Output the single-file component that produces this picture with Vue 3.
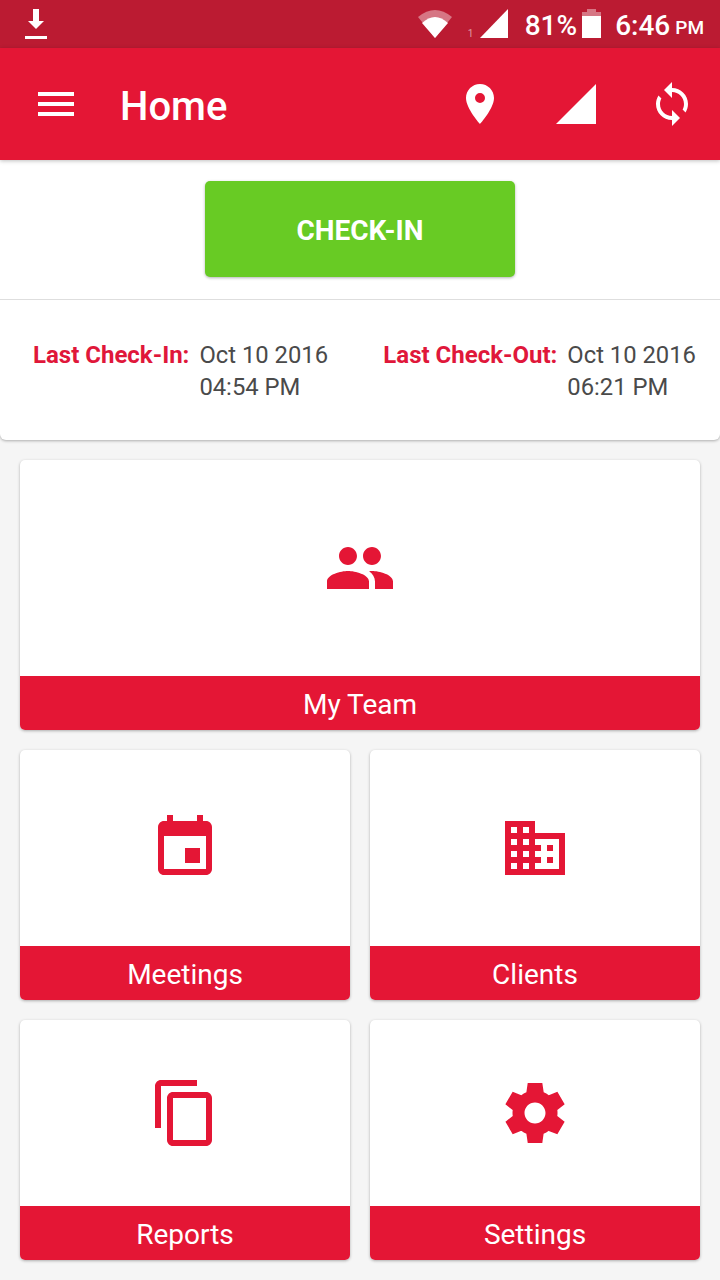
<script setup>
const tiles = [
  { name: 'My Team', wide: true, d: 'M16 11c1.66 0 2.99-1.34 2.99-3S17.66 5 16 5c-1.66 0-3 1.34-3 3s1.34 3 3 3zm-8 0c1.66 0 2.99-1.34 2.99-3S9.66 5 8 5C6.34 5 5 6.34 5 8s1.34 3 3 3zm0 2c-2.33 0-7 1.17-7 3.5V19h14v-2.5c0-2.33-4.67-3.5-7-3.5zm8 0c-.29 0-.62.02-.97.05 1.16.84 1.97 1.97 1.97 3.45V19h6v-2.5c0-2.33-4.67-3.5-7-3.5z' },
  { name: 'Meetings', d: 'M17 12h-5v5h5v-5zM16 1v2H8V1H6v2H5c-1.11 0-1.99.9-1.99 2L3 19c0 1.1.89 2 2 2h14c1.1 0 2-.9 2-2V5c0-1.1-.9-2-2-2h-1V1h-2zm3 18H5V8h14v11z' },
  { name: 'Clients', d: 'M12 7V3H2v18h20V7H12zM6 19H4v-2h2v2zm0-4H4v-2h2v2zm0-4H4V9h2v2zm0-4H4V5h2v2zm4 12H8v-2h2v2zm0-4H8v-2h2v2zm0-4H8V9h2v2zm0-4H8V5h2v2zm10 12h-8v-2h2v-2h-2v-2h2v-2h-2V9h8v10zm-2-8h-2v2h2v-2zm0 4h-2v2h2v-2z' },
  { name: 'Reports', d: 'M16 1H4c-1.1 0-2 .9-2 2v14h2V3h12V1zm3 4H8c-1.1 0-2 .9-2 2v14c0 1.1.9 2 2 2h11c1.1 0 2-.9 2-2V7c0-1.1-.9-2-2-2zm0 16H8V7h11v14z' },
  { name: 'Settings', d: 'M19.44 12.99l-.01.02c.04-.33.08-.67.08-1.01 0-.34-.03-.66-.07-.99l.01.02 2.44-1.92-2.43-4.22-2.87 1.16.01.01c-.52-.4-1.09-.74-1.71-1h.01L14.44 2H9.57l-.44 3.07h.01c-.62.26-1.19.6-1.71 1l.01-.01-2.88-1.17-2.44 4.22 2.44 1.92.01-.02c-.04.33-.07.65-.07.99 0 .34.03.68.08 1.01l-.01-.02-2.1 1.65-.33.26 2.43 4.2 2.88-1.15-.02-.04c.53.41 1.1.75 1.73 1.01h-.03L9.58 22h4.85s.03-.18.06-.42l.38-2.65h-.01c.62-.26 1.2-.6 1.73-1.01l-.02.04 2.88 1.15 2.43-4.2s-.14-.12-.33-.26l-2.11-1.66zM12 15.5c-1.93 0-3.5-1.57-3.5-3.5s1.57-3.5 3.5-3.5 3.5 1.57 3.5 3.5-1.57 3.5-3.5 3.5z' },
]
const checks = [
  { label: 'Last Check-In:', date: 'Oct 10 2016', time: '04:54 PM' },
  { label: 'Last Check-Out:', date: 'Oct 10 2016', time: '06:21 PM' },
]
</script>

<template>
  <div class="screen">
    <div class="status">
      <svg class="st-download" width="22" height="30" viewBox="0 0 22 30">
        <path fill="#fff" d="M8 0h6v12h5l-8 8-8-8h5zM0 27h22v3H0z" />
      </svg>
      <div class="st-right">
        <svg class="st-wifi" width="34" height="28" viewBox="0 0 34 28">
          <path fill="#fff" fill-opacity=".4" d="M17 28 0 7Q17-7 34 7Z" />
          <path fill="#fff" d="M17 28 4 13Q17 1 30 13Z" />
        </svg>
        <span class="st-sim">1</span>
        <svg class="st-signal" width="28" height="29" viewBox="0 0 28 29">
          <path fill="#fff" d="M0 29 28 0v29z" />
        </svg>
        <span class="st-text st-pct">81%</span>
        <svg class="st-batt" width="19" height="29" viewBox="0 0 19 29">
          <path fill="#fff" fill-opacity=".4" d="M5 0h9v3h5v4H0V3h5z" />
          <path fill="#fff" d="M0 7h19v22H0z" />
        </svg>
        <span class="st-text st-time">6:46</span>
        <span class="st-text st-pm">PM</span>
      </div>
    </div>

    <header class="toolbar">
      <svg class="menu" width="36" height="24" viewBox="0 0 36 24">
        <path fill="#fff" d="M0 0h36v4H0zM0 10h36v4H0zM0 20h36v4H0z" />
      </svg>
      <h1 class="title">Home</h1>
      <svg class="tb-icon tb-pin" width="48" height="48" viewBox="0 0 24 24">
        <path fill="#fff" d="M12 2C8.13 2 5 5.13 5 9c0 5.25 7 13 7 13s7-7.75 7-13c0-3.87-3.13-7-7-7zm0 9.5a2.5 2.5 0 0 1 0-5 2.5 2.5 0 0 1 0 5z" />
      </svg>
      <svg class="tb-icon tb-signal" width="48" height="48" viewBox="0 0 24 24">
        <path fill="#fff" d="M2 22 22 2v20z" />
      </svg>
      <svg class="tb-icon tb-sync" width="48" height="48" viewBox="0 0 24 24">
        <path fill="#fff" d="M12 4V1L8 5l4 4V6c3.31 0 6 2.69 6 6 0 1.01-.25 1.97-.7 2.8l1.46 1.46C19.54 15.03 20 13.57 20 12c0-4.42-3.58-8-8-8zm0 14c-3.31 0-6-2.69-6-6 0-1.01.25-1.97.7-2.8L5.24 7.74C4.46 8.97 4 10.43 4 12c0 4.42 3.58 8 8 8v3l4-4-4-4v3z" />
      </svg>
    </header>

    <section class="panel">
      <div class="action">
        <button class="checkin">CHECK-IN</button>
      </div>
      <div class="info">
        <div v-for="c in checks" :key="c.label" class="check">
          <span class="check-label">{{ c.label }}</span>
          <span class="check-value">{{ c.date }}<br />{{ c.time }}</span>
        </div>
      </div>
    </section>

    <main class="grid">
      <article v-for="t in tiles" :key="t.name" class="tile" :class="{ wide: t.wide }">
        <div class="tile-body">
          <svg width="72" height="72" viewBox="0 0 24 24"><path fill="#e41635" :d="t.d" /></svg>
        </div>
        <div class="tile-label">{{ t.name }}</div>
      </article>
    </main>
  </div>
</template>

<style>
html, body { margin: 0; background: #f5f5f5; }
</style>

<style scoped>
.screen {
  width: 720px;
  height: 1280px;
  overflow: hidden;
  background: #f5f5f5;
  font-family: Roboto, "Liberation Sans", sans-serif;
}
.status {
  height: 48px;
  background: #bb1b32;
  display: flex;
  align-items: center;
  justify-content: space-between;
  padding: 0 16px 0 25px;
  box-sizing: border-box;
}
.st-download { margin-top: 2px; margin-bottom: 3px; }
.st-right { display: flex; align-items: center; height: 48px; }
.st-sim {
  font-size: 10px;
  line-height: 10px;
  color: rgba(255, 255, 255, .55);
  width: 12px;
  margin: 20px 0 0 16px;
}
.st-signal { margin-top: -1px; }
.st-text { color: #fff; font-weight: 500; line-height: 48px; padding-top: 4px; }
.st-pct { font-size: 28px; margin-left: 17px; }
.st-batt { margin-left: 5px; margin-top: -1px; }
.st-time { font-size: 28px; margin-left: 14px; }
.st-pm { font-size: 19px; margin-left: 5px; padding-top: 7px; }

.toolbar {
  position: relative;
  z-index: 2;
  height: 112px;
  background: #e41635;
  display: flex;
  align-items: center;
  box-shadow: 0 1px 4px rgba(0, 0, 0, .25);
}
.menu { margin-left: 38px; }
.title {
  margin: 5px 0 0 46px;
  flex: 1;
  color: #fff;
  font-size: 40px;
  font-weight: 500;
  line-height: 48px;
}
.tb-pin { margin-right: 48px; }
.tb-signal { margin-right: 48px; }
.tb-sync { margin-right: 24px; }

.panel {
  height: 280px;
  background: #fff;
  border-radius: 0 0 6px 6px;
  box-shadow: 0 1px 3px rgba(0, 0, 0, .3);
}
.action {
  height: 140px;
  box-sizing: border-box;
  padding-top: 21px;
  display: flex;
  justify-content: center;
  border-bottom: 1px solid #dedede;
}
.checkin {
  width: 310px;
  height: 96px;
  border: 0;
  padding: 2px 0 0;
  border-radius: 5px;
  background: #68cb24;
  color: #fff;
  font-family: inherit;
  font-size: 28px;
  font-weight: 700;
  box-shadow: 0 1px 3px rgba(0, 0, 0, .3);
}
.info {
  display: flex;
  justify-content: space-between;
  padding: 39px 24px 0 33px;
}
.check { display: flex; gap: 10px; }
.check-label {
  color: #e0173a;
  font-size: 24px;
  font-weight: 700;
  line-height: 32px;
}
.check-value {
  color: #4a4a4a;
  font-size: 23.8px;
  line-height: 32px;
}

.grid {
  display: grid;
  grid-template-columns: 330px 330px;
  grid-template-rows: 270px 250px 240px;
  gap: 20px;
  padding: 20px;
}
.tile {
  display: flex;
  flex-direction: column;
  background: #fff;
  border-radius: 5px;
  overflow: hidden;
  box-shadow: 0 1px 3px rgba(0, 0, 0, .3);
}
.tile.wide { grid-column: 1 / 3; }
.tile-body {
  flex: 1;
  display: flex;
  align-items: center;
  justify-content: center;
}
.tile-body svg { display: block; }
.tile-label {
  height: 54px;
  background: #e41635;
  color: #fff;
  font-size: 28px;
  line-height: 58px;
  text-align: center;
}
</style>
